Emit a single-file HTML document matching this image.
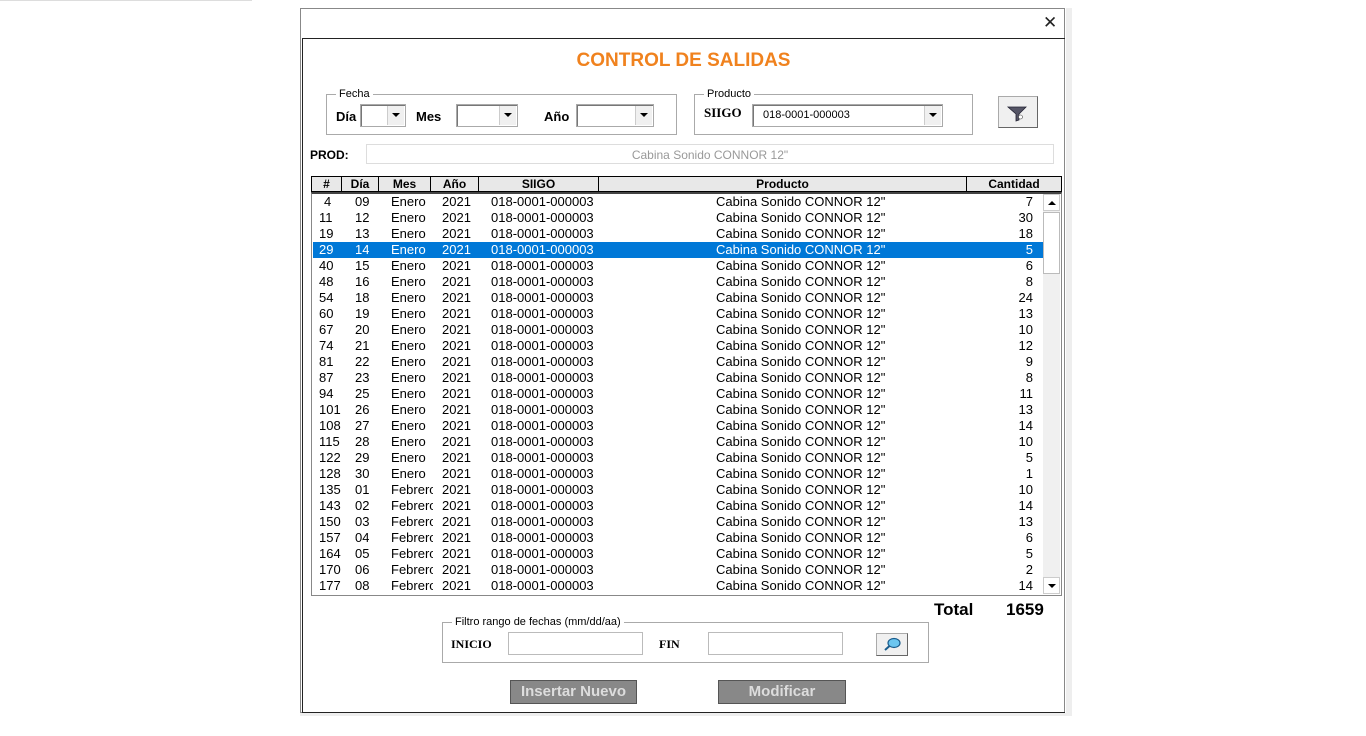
<!DOCTYPE html>
<html><head><meta charset="utf-8"><style>
body{margin:0;width:1366px;height:736px;background:#fff;position:relative;overflow:hidden;font-family:"Liberation Sans",sans-serif;}
.a{position:absolute;}
.win{left:300px;top:8px;width:765px;height:705px;border:1px solid #888;background:#fff;box-sizing:border-box;}
.inner{left:302px;top:38px;width:763px;height:675px;border:1.5px solid #222;border-right:none;box-sizing:border-box;}
.grp{border:1px solid #aaa;box-sizing:border-box;}
.leg{background:#fff;font-size:11px;padding:0 3px;color:#000;}
.lbl{font-weight:bold;font-size:13px;}
.combo{border:1px solid #aaa;box-shadow:inset 1px 1px 0 #777;background:#fff;box-sizing:border-box;}
.btn{position:absolute;right:1px;top:1px;width:16px;bottom:1px;background:#f0f0f0;border-left:1px solid #ccc;}
.btn:after{content:"";position:absolute;left:4px;top:7px;border-left:4px solid transparent;border-right:4px solid transparent;border-top:4px solid #000;}
.hd{top:176px;height:16px;border:1px solid #000;background:#e8e8e8;font-weight:bold;font-size:12px;text-align:center;line-height:14px;box-sizing:border-box;}
.row{position:absolute;left:313px;width:730px;height:16px;font-size:13px;line-height:16px;}
.row span{position:absolute;top:0;white-space:nowrap;overflow:hidden;}
.sel{background:#0078d7;color:#fff;}
.gb{background:#888;color:#ddd;font-weight:bold;font-size:15px;text-align:center;line-height:22px;border:1px solid #555;box-sizing:border-box;font-family:"Liberation Sans Narrow","Liberation Sans",sans-serif;}
</style></head><body>
<div class="a" style="left:0;top:0;width:252px;height:1px;background:#ddd"></div>
<div class="a" style="left:1066px;top:8px;width:6px;height:708px;background:#eee"></div>
<div class="a" style="left:300px;top:713px;width:770px;height:3px;background:#eee"></div>
<div class="a win"></div>
<div class="a" style="left:1043px;top:13px;font-size:17px;color:#222">✕</div>
<div class="a inner"></div>
<div class="a" style="left:302px;top:50px;width:763px;text-align:center;color:#f0821e;font-weight:bold;font-size:19px">CONTROL DE SALIDAS</div>

<div class="a grp" style="left:326px;top:94px;width:351px;height:41px"></div>
<div class="a leg" style="left:336px;top:88px">Fecha</div>
<div class="a lbl" style="left:336px;top:109px">Día</div>
<div class="a combo" style="left:360px;top:104px;width:46px;height:23px"><div class="btn"></div></div>
<div class="a lbl" style="left:416px;top:109px">Mes</div>
<div class="a combo" style="left:456px;top:104px;width:62px;height:23px"><div class="btn"></div></div>
<div class="a lbl" style="left:544px;top:109px">Año</div>
<div class="a combo" style="left:576px;top:104px;width:78px;height:23px"><div class="btn"></div></div>

<div class="a grp" style="left:694px;top:94px;width:279px;height:41px"></div>
<div class="a leg" style="left:704px;top:88px">Producto</div>
<div class="a" style="left:704px;top:105px;font-family:'Liberation Serif',serif;font-weight:bold;font-size:13px">SIIGO</div>
<div class="a combo" style="left:752px;top:104px;width:191px;height:23px;font-size:11px;line-height:21px;padding-left:10px">018-0001-000003<div class="btn"></div></div>
<div class="a" style="left:998px;top:96px;width:40px;height:32px;background:#f0f0f0;border:1px solid #aaa;border-right-color:#666;border-bottom-color:#666;box-sizing:border-box">
<svg width="38" height="30"><path d="M9 10 H27 L20 17 V23 L17 24 V17 Z" fill="#556" stroke="#223" stroke-width="0.8"/><circle cx="21.5" cy="20" r="2" fill="#fff" stroke="#444" stroke-width="0.6"/></svg></div>

<div class="a lbl" style="left:310px;top:148px;font-size:12px">PROD:</div>
<div class="a" style="left:366px;top:144px;width:688px;height:20px;border:1px solid #ddd;box-sizing:border-box;text-align:center;color:#999;font-size:12px;line-height:20px">Cabina Sonido CONNOR 12"</div>

<div class="a" style="left:311px;top:192px;width:751px;height:404px;border:1px solid #888;border-top:2px solid #444;box-sizing:border-box"></div>
<div class="a hd" style="left:311px;width:31px">#</div>
<div class="a hd" style="left:341px;width:38px">Día</div>
<div class="a hd" style="left:378px;width:53px">Mes</div>
<div class="a hd" style="left:430px;width:49px">Año</div>
<div class="a hd" style="left:478px;width:121px">SIIGO</div>
<div class="a hd" style="left:598px;width:369px">Producto</div>
<div class="a hd" style="left:966px;width:96px">Cantidad</div>

<div class="a" style="left:1043px;top:194px;width:17px;height:400px;background:#f0f0f0"></div>
<div class="a" style="left:1043px;top:194px;width:17px;height:17px;background:#fff;border:1px solid #ccc;box-sizing:border-box"><div style="margin:6px 0 0 4px;width:0;border-left:4px solid transparent;border-right:4px solid transparent;border-bottom:4px solid #000"></div></div>
<div class="a" style="left:1043px;top:212px;width:17px;height:62px;background:#fff;border:1px solid #bbb;box-sizing:border-box"></div>
<div class="a" style="left:1043px;top:577px;width:17px;height:17px;background:#fff;border:1px solid #ccc;box-sizing:border-box"><div style="margin:6px 0 0 4px;width:0;border-left:4px solid transparent;border-right:4px solid transparent;border-top:4px solid #000"></div></div>

<div id="rows"></div>
<script>
var d=[["4","09","Enero",7],["11","12","Enero",30],["19","13","Enero",18],["29","14","Enero",5],["40","15","Enero",6],["48","16","Enero",8],["54","18","Enero",24],["60","19","Enero",13],["67","20","Enero",10],["74","21","Enero",12],["81","22","Enero",9],["87","23","Enero",8],["94","25","Enero",11],["101","26","Enero",13],["108","27","Enero",14],["115","28","Enero",10],["122","29","Enero",5],["128","30","Enero",1],["135","01","Febrero",10],["143","02","Febrero",14],["150","03","Febrero",13],["157","04","Febrero",6],["164","05","Febrero",5],["170","06","Febrero",2],["177","08","Febrero",14]];
var h="";for(var i=0;i<25;i++){var r=d[i];h+='<div class="row'+(i==3?' sel':'')+'" style="top:'+(194+16*i)+'px"><span style="left:'+(r[0].length==1?11:6)+'px;width:22px">'+r[0]+'</span><span style="left:42px">'+r[1]+'</span><span style="left:78px;width:42px">'+r[2]+'</span><span style="left:129px">2021</span><span style="left:178px">018-0001-000003</span><span style="left:403px">Cabina Sonido CONNOR 12"</span><span style="left:680px;width:40px;text-align:right">'+r[3]+'</span></div>';}
document.getElementById("rows").innerHTML=h;
</script>

<div class="a" style="left:934px;top:600px;font-weight:bold;font-size:17px">Total</div>
<div class="a" style="left:1006px;top:600px;font-weight:bold;font-size:17px">1659</div>

<div class="a grp" style="left:442px;top:622px;width:487px;height:41px"></div>
<div class="a leg" style="left:452px;top:616px;font-family:'Liberation Sans Narrow','Liberation Sans',sans-serif">Filtro rango de fechas (mm/dd/aa)</div>
<div class="a" style="left:451px;top:637px;font-family:'Liberation Serif',serif;font-weight:bold;font-size:12px">INICIO</div>
<div class="a combo" style="left:508px;top:632px;width:135px;height:23px;box-shadow:none;border-color:#bbb"></div>
<div class="a" style="left:659px;top:637px;font-family:'Liberation Serif',serif;font-weight:bold;font-size:12px">FIN</div>
<div class="a combo" style="left:708px;top:632px;width:135px;height:23px;box-shadow:none;border-color:#bbb"></div>
<div class="a" style="left:876px;top:633px;width:32px;height:23px;background:#f0f0f0;border:1px solid #aaa;border-right-color:#666;border-bottom-color:#666;box-sizing:border-box">
<svg width="30" height="21"><ellipse cx="17" cy="9" rx="6" ry="4.5" fill="#6cc6f0" stroke="#1a5c8c" stroke-width="1.2"/><path d="M12.5 12 L8 16" stroke="#1a5c8c" stroke-width="2"/></svg></div>

<div class="a gb" style="left:510px;top:680px;width:127px;height:24px">Insertar Nuevo</div>
<div class="a gb" style="left:718px;top:680px;width:128px;height:24px">Modificar</div>
</body></html>
